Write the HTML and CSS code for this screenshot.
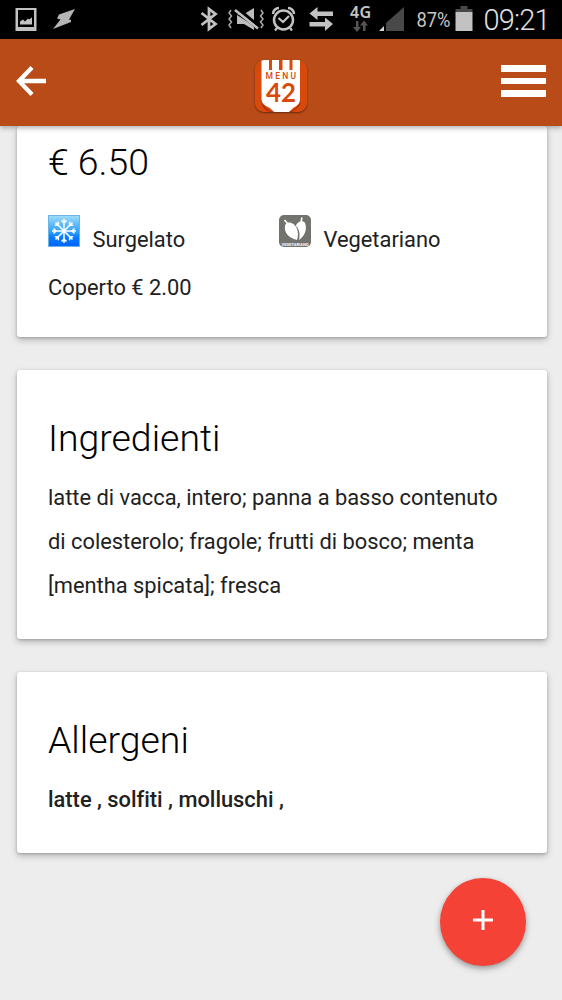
FILE: index.html
```html
<!DOCTYPE html>
<html lang="it">
<head>
    <meta charset="utf-8">
    <title>Menu 42</title>
    <meta name="viewport" content="width=device-width, initial-scale=1.0">
    <link rel="stylesheet" href="styles.css">
</head>
<body>
    <div class="status-bar">
        <svg class="status-icons" width="562" height="39" viewBox="0 0 562 39">
            <!-- picture -->
            <path d="M15.5 8h21v23h-21z M18 10v17h16v-17z" fill="#c2c2c2" fill-rule="evenodd"/>
            <path d="M20 24.500v-3l3-2 2 2 3-3 1 1 3-2v7z" fill="#c2c2c2"/>
            <!-- flash -->
            <path d="M75 9L59 14.500l-2 4 3.500 1-7.500 9.500 18-7v-2l-2-.500z" fill="#b5b5b5"/>
            <!-- bluetooth -->
            <path d="M201.500 13l14 11-6.500 5v-20l6.500 5-14 11" fill="none" stroke="#c2c2c2" stroke-width="2.800"/>
            <!-- muted -->
            <path d="M237 14h7l10-6v12zM237 15v9h7l10 6v-4z" fill="#bdbdbd"/>
            <path d="M236 8l23 20" stroke="#000" stroke-width="5"/>
            <path d="M235 10l23 18.500" stroke="#c2c2c2" stroke-width="2.500"/>
            <path d="M231 10l-2 3 2.500 3-2.500 3 2.500 3-2.500 3 2 3M261 10l2 3-2.500 3 2.500 3-2.500 3 2.500 3-2 3" fill="none" stroke="#aaa" stroke-width="1.500"/>
            <!-- alarm -->
            <circle cx="283.500" cy="20" r="9.500" fill="none" stroke="#c2c2c2" stroke-width="2.500"/>
            <path d="M278.500 18l4.500 4 6-6M277 28l-2 2.500M290 28l2 2.500" fill="none" stroke="#c2c2c2" stroke-width="2.200"/>
            <path d="M273 14a6 6 0 0 1 6-6M288 8a6 6 0 0 1 6 6" fill="none" stroke="#c2c2c2" stroke-width="2.500"/>
            <!-- transfer -->
            <path d="M309.500 13.500l8-6.500v4.500H333v4.500h-15.500v4zM333 24l-8-6.500V22h-15.500v4.500H325V31z" fill="#c2c2c2"/>
            <text x="350" y="17.500" class="network" textLength="21">4G</text>
            <path d="M356 21h2.500v6h2.500l-4 5-4-5h3zM363 31v-5.500h-3l4-5 4 5h-2.500V31z" fill="#555"/>
            <!-- signal -->
            <path d="M404 7v24h-18V23z" fill="#494949"/>
            <path d="M384 26v5h-5z" fill="#d5d5d5"/>
            <text x="416.500" y="27" class="percent" textLength="34" lengthAdjust="spacingAndGlyphs">87%</text>
            <!-- battery -->
            <path d="M455.500 9h5V6h7v3h5v3h-17z" fill="#494949"/>
            <path d="M455.500 12h17v19h-17z" fill="#c2c2c2"/>
            <text x="483.500" y="30" class="clock" textLength="67">09:21</text>
        </svg>
    </div>

    <div class="navbar">
        <svg class="back" width="32" height="32" viewBox="0 0 32 32">
            <path d="M17 2.500L4 16l13 13.500M4 16h27" fill="none" stroke="#fff" stroke-width="4.300"/>
        </svg>
        <svg class="logo" width="52" height="52" viewBox="0 0 52 52">
            <rect width="52" height="52" rx="9" fill="#d84a0c"/>
            <path d="M6 40q1 5 9 11h22q8-6 9-11l-1 5q-3 4-8 7H15q-7-3-8-7z" fill="#b52a10"/>
            <path d="M6.500 0H14v10h3V0h7v10h3.500V0h7v10h3V0h7.500v39q0 6-7 9l-4 4H19l-4-4q-8.500-3-8.500-9z" fill="#fff"/>
            <text x="10.500" y="19.300" class="logo-name" textLength="30.500">MENU</text>
            <text x="11" y="41.500" class="logo-number" textLength="30" lengthAdjust="spacingAndGlyphs">42</text>
        </svg>
        <div class="menu-btn"><span></span><span></span><span></span></div>
    </div>

    <div class="content">
        <div class="card card-price">
            <h2>€ 6.50</h2>
            <div class="features">
                <div class="feature">
                    <svg width="32" height="32" viewBox="0 0 32 32">
                        <defs>
                            <linearGradient id="ice" x1="0" y1="0" x2="0" y2="1">
                                <stop offset="0" stop-color="#9fdcfa"/>
                                <stop offset="0.500" stop-color="#35a3fb"/>
                                <stop offset="0.700" stop-color="#087cff"/>
                                <stop offset="1" stop-color="#0064fa"/>
                            </linearGradient>
                            <g id="arm">
                                <path d="M16 16V4M13.500 5.500L16 8l2.500-2.500"/>
                            </g>
                        </defs>
                        <rect x="0.500" y="0.500" width="31" height="31" fill="url(#ice)" stroke="#6ab4e6"/>
                        <g fill="none" stroke="#fff" stroke-width="1.500">
                            <use href="#arm"/>
                            <use href="#arm" transform="rotate(45 16 16)"/>
                            <use href="#arm" transform="rotate(90 16 16)"/>
                            <use href="#arm" transform="rotate(135 16 16)"/>
                            <use href="#arm" transform="rotate(180 16 16)"/>
                            <use href="#arm" transform="rotate(225 16 16)"/>
                            <use href="#arm" transform="rotate(270 16 16)"/>
                            <use href="#arm" transform="rotate(315 16 16)"/>
                        </g>
                    </svg>
                    <span>Surgelato</span>
                </div>
                <div class="feature">
                    <svg width="32" height="32" viewBox="0 0 32 32">
                        <rect width="32" height="32" rx="5" fill="#72726f"/>
                        <path d="M18 25C9 23 5 17 6 11c0-2 2-4 5-3.500 6 1 10 9 7 17.500z" fill="#fff"/>
                        <path d="M20 25c7-5 8-12 6-17-1-2-4-2-6-1-2 1-3 3-3 4 4 4 4 9 3 14z" fill="#fff"/>
                        <path d="M9 9L5.500 5M22 7l1-4.500" stroke="#fff" stroke-width="1.600"/>
                        <text x="2.500" y="30.500" class="veg-label" textLength="27">VEGETARIANO</text>
                    </svg>
                    <span>Vegetariano</span>
                </div>
            </div>
            <p>Coperto € 2.00</p>
        </div>

        <div class="card">
            <h2>Ingredienti</h2>
            <p>latte di vacca, intero; panna a basso contenuto di colesterolo; fragole; frutti di bosco; menta [mentha spicata]; fresca</p>
        </div>

        <div class="card">
            <h2>Allergeni</h2>
            <p class="allergens">latte , solfiti , molluschi ,</p>
        </div>
    </div>

    <div class="add-btn">
        <svg width="22" height="22" viewBox="0 0 22 22">
            <path d="M11 1v20M1 11h20" stroke="#fff" stroke-width="3"/>
        </svg>
    </div>
</body>
</html>
```

FILE: styles.css
```css
* {
    box-sizing: border-box;
}
body {
    margin: 0;
    height: 1000px;
    overflow: hidden;
    background: #ededed;
    color: #212121;
    font-family: Roboto, sans-serif;
    font-size: 21.85px;
    font-variant-ligatures: none;
}
.status-bar {
    height: 39px;
    background: #000;
}
.status-icons {
    display: block;
}
.status-icons text {
    fill: #c6c6c6;
}
.status-icons .network {
    font-family: "Noto Sans", sans-serif;
    font-size: 16px;
    font-weight: 600;
}
.status-icons .percent {
    font-size: 20px;
}
.status-icons .clock {
    font-size: 29px;
    font-weight: 300;
    fill: #e0e0e0;
}
.navbar {
    position: relative;
    z-index: 1;
    display: flex;
    justify-content: space-between;
    align-items: center;
    height: 87px;
    padding: 0 16px 0 15px;
    background: #b84b17;
    box-shadow: 0 2px 5px rgba(0, 0, 0, 0.3);
}
.navbar svg {
    display: block;
}
.back {
    margin-top: -3px;
}
.logo {
    margin: 6px 0 0 13px;
    border-radius: 9px;
    box-shadow: 0 1px 2px rgba(0, 0, 0, 0.45);
}
.logo-name {
    font-size: 8.5px;
    font-weight: 500;
    fill: #d84a0c;
}
.logo-number {
    font-family: Lato, sans-serif;
    font-size: 27px;
    font-weight: 700;
    fill: #d84a0c;
}
.menu-btn {
    display: flex;
    flex-direction: column;
    gap: 6px;
    width: 45px;
    margin-top: -3px;
}
.menu-btn span {
    height: 6.5px;
    background: #fff;
}
.content {
    padding: 0 15.5px 0 17px;
}
.card {
    margin-bottom: 33px;
    padding: 32px 31px 30.9px;
    background: #fff;
    border-radius: 3px;
    box-shadow: 0 3px 7px rgba(0, 0, 0, 0.22), 0 1px 3px rgba(0, 0, 0, 0.2);
}
.card-price {
    padding-top: 0;
    padding-bottom: 27.2px;
}
.card h2 {
    margin: 0;
    color: #000;
    font-size: 37.4px;
    font-weight: 300;
    line-height: 73px;
}
.card p {
    margin: 0;
    line-height: 44px;
}
.card h2 + p {
    margin-top: 0.8px;
}
.card .allergens {
    font-weight: 500;
}
.features {
    display: flex;
    height: 67.3px;
    padding-top: 16px;
}
.feature {
    display: flex;
    align-items: baseline;
    gap: 12.5px;
    width: 231px;
}
.veg-label {
    font-size: 4px;
    font-weight: 700;
    fill: #fff;
}
.add-btn {
    position: absolute;
    left: 440px;
    top: 878px;
    display: flex;
    justify-content: center;
    align-items: center;
    width: 86px;
    height: 88px;
    padding-bottom: 4px;
    border-radius: 50%;
    background: #f44336;
    box-shadow: 0 3px 7px rgba(0, 0, 0, 0.25), 0 2px 4px rgba(0, 0, 0, 0.15);
}
```
